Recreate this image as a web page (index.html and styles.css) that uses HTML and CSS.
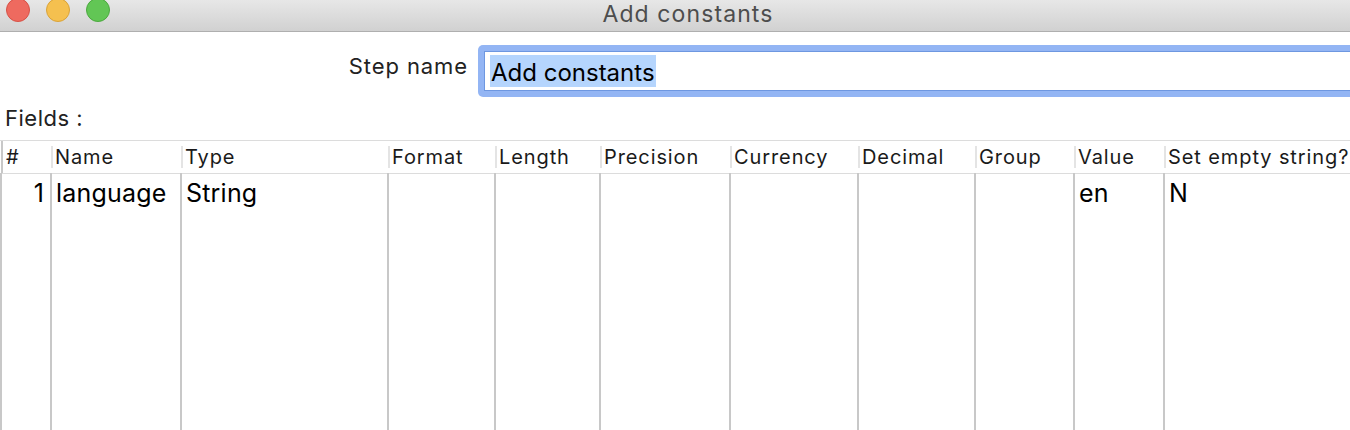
FILE: index.html
```html
<!DOCTYPE html>
<html>
<head>
<meta charset="utf-8">
<link rel="stylesheet" href="styles.css">
</head>
<body>
<div class="window">
  <div class="titlebar">
    <div class="lights">
      <span class="light red"></span>
      <span class="light yellow"></span>
      <span class="light green"></span>
    </div>
    <div class="title">Add constants</div>
  </div>
  <div class="content">
    <div class="form-row">
      <label class="label">Step name</label>
      <div class="input-ring">
        <div class="input"><span class="sel">Add constants</span></div>
      </div>
    </div>
    <div class="fields-label">Fields :</div>
    <div class="table-wrap">
      <table class="grid">
        <colgroup>
          <col class="c1"><col class="c2"><col class="c3"><col class="c4"><col class="c5"><col class="c6"><col class="c7"><col class="c8"><col class="c9"><col class="c10"><col class="c11">
        </colgroup>
        <thead>
          <tr>
            <th class="first">#</th><th>Name</th><th>Type</th><th>Format</th><th>Length</th><th>Precision</th><th>Currency</th><th>Decimal</th><th>Group</th><th>Value</th><th>Set empty string?</th>
          </tr>
        </thead>
        <tbody>
          <tr class="data">
            <td class="num first">1</td><td>language</td><td>String</td><td></td><td></td><td></td><td></td><td></td><td></td><td>en</td><td>N</td>
          </tr>
          <tr class="filler">
            <td class="first"></td><td></td><td></td><td></td><td></td><td></td><td></td><td></td><td></td><td></td><td></td>
          </tr>
        </tbody>
      </table>
    </div>
  </div>
</div>
</body>
</html>
```
FILE: styles.css
```css
html, body {
  margin: 0;
  padding: 0;
  background: #ffffff;
}
body {
  width: 1350px;
  height: 430px;
  overflow: hidden;
  font-family: Inter, "Noto Sans", sans-serif;
}
.window {
  display: flex;
  flex-direction: column;
  height: 430px;
}
.titlebar {
  position: relative;
  height: 31px;
  flex: none;
  background: linear-gradient(#e7e7e7, #d1d1d1);
  border-bottom: 1px solid #afafaf;
  display: flex;
  align-items: flex-start;
  justify-content: center;
}
.lights {
  position: absolute;
  left: 6px;
  top: -2px;
  display: flex;
  gap: 16px;
}
.light {
  width: 22px;
  height: 22px;
  border-radius: 50%;
  display: block;
}
.red { background: #ee6a5f; border: 1px solid #d65247; }
.yellow { background: #f5c04f; border: 1px solid #d9a33a; }
.green { background: #62c655; border: 1px solid #4ca93f; }
.title {
  font-size: 23px;
  line-height: normal;
  color: #4d4d4d;
  margin-left: 26px;
  letter-spacing: 1.1px;
}
.content {
  display: flex;
  flex-direction: column;
}
.form-row {
  display: flex;
  align-items: flex-start;
  margin-top: 13px;
}
.label {
  flex: none;
  width: 468px;
  text-align: right;
  font-size: 22px;
  letter-spacing: 0.9px;
  color: #222;
  padding-top: 8px;
  margin-right: 10px;
}
.input-ring {
  flex: none;
  width: 900px;
  height: 52px;
  box-sizing: border-box;
  background: #93b5f4;
  border-radius: 5px 0 0 5px;
  padding: 6px 0 6px 6px;
}
.input {
  height: 40px;
  box-sizing: border-box;
  background: #fff;
  border-top: 1px solid #6e97e0;
  border-bottom: 1px solid #6e97e0;
  border-left: 1px solid #6e97e0;
  padding: 3px 0 0 5px;
  font-size: 24px;
  color: #000;
}
.sel {
  background: #b5d5fd;
  display: inline-block;
  height: 32px;
  line-height: 35px;
  padding: 0 1px;
}
.fields-label {
  margin-top: 8px;
  margin-left: 5px;
  font-size: 22px;
  letter-spacing: 0.5px;
  color: #222;
  height: 35px;
}
.table-wrap {
  flex: 1;
  overflow: hidden;
  border-top: 1px solid #dcdcdc;
}
.grid {
  table-layout: fixed;
  border-collapse: collapse;
  width: 1450px;
  height: 300px;
}
.c1 { width: 50px; }
.c2 { width: 130px; }
.c3 { width: 207px; }
.c4 { width: 107px; }
.c5 { width: 105px; }
.c6 { width: 130px; }
.c7 { width: 128px; }
.c8 { width: 117px; }
.c9 { width: 99px; }
.c10 { width: 90px; }
.c11 { width: 287px; }
th {
  position: relative;
  height: 32px;
  padding: 0 0 0 4px;
  text-align: left;
  font-weight: normal;
  font-size: 20px;
  letter-spacing: 0.9px;
  color: #1a1a1a;
  border-bottom: 1px solid #dcdcdc;
  white-space: nowrap;
  overflow: hidden;
}
th::before {
  content: "";
  position: absolute;
  left: 0;
  top: 5px;
  bottom: 5px;
  width: 2px;
  background: #e4e4e4;
}
th.first::before {
  top: 0;
  bottom: 0;
  background: #c8c8c8;
}
th.first {
  padding-left: 5px;
}
td {
  border-left: 2px solid #c8c8c8;
  padding: 0 0 0 4px;
  font-size: 25px;
  letter-spacing: 0.2px;
  color: #000;
  white-space: nowrap;
  vertical-align: top;
}
tr.data td {
  height: 36px;
  line-height: 38px;
}
td.num {
  text-align: right;
  padding-right: 6px;
}
```
